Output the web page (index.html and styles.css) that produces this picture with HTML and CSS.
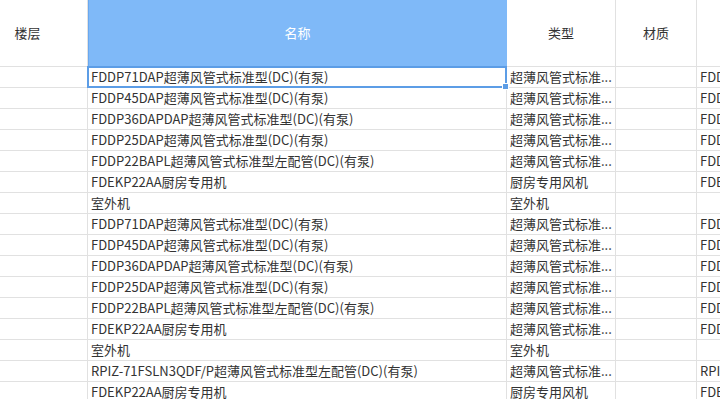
FILE: index.html
```html
<!DOCTYPE html>
<html lang="zh">
<head>
<meta charset="utf-8">
<link rel="stylesheet" href="styles.css">
</head>
<body>
<div class="sheet">
  <div class="row head">
    <div class="cell floor">楼层</div>
    <div class="cell hsel">名称</div>
    <div class="cell">类型</div>
    <div class="cell">材质</div>
    <div class="cell"></div>
  </div>
  <div class="row"><div class="cell"></div><div class="cell selected">FDDP71DAP超薄风管式标准型(DC)(有泵)</div><div class="cell">超薄风管式标准...</div><div class="cell"></div><div class="cell">FDDP71DAP</div></div>
  <div class="row"><div class="cell"></div><div class="cell">FDDP45DAP超薄风管式标准型(DC)(有泵)</div><div class="cell">超薄风管式标准...</div><div class="cell"></div><div class="cell">FDDP45DAP</div></div>
  <div class="row"><div class="cell"></div><div class="cell">FDDP36DAPDAP超薄风管式标准型(DC)(有泵)</div><div class="cell">超薄风管式标准...</div><div class="cell"></div><div class="cell">FDDP36DAP</div></div>
  <div class="row"><div class="cell"></div><div class="cell">FDDP25DAP超薄风管式标准型(DC)(有泵)</div><div class="cell">超薄风管式标准...</div><div class="cell"></div><div class="cell">FDDP25DAP</div></div>
  <div class="row"><div class="cell"></div><div class="cell">FDDP22BAPL超薄风管式标准型左配管(DC)(有泵)</div><div class="cell">超薄风管式标准...</div><div class="cell"></div><div class="cell">FDDP22BAPL</div></div>
  <div class="row"><div class="cell"></div><div class="cell">FDEKP22AA厨房专用机</div><div class="cell">厨房专用风机</div><div class="cell"></div><div class="cell">FDEKP22AA</div></div>
  <div class="row"><div class="cell"></div><div class="cell">室外机</div><div class="cell">室外机</div><div class="cell"></div><div class="cell"></div></div>
  <div class="row"><div class="cell"></div><div class="cell">FDDP71DAP超薄风管式标准型(DC)(有泵)</div><div class="cell">超薄风管式标准...</div><div class="cell"></div><div class="cell">FDDP71DAP</div></div>
  <div class="row"><div class="cell"></div><div class="cell">FDDP45DAP超薄风管式标准型(DC)(有泵)</div><div class="cell">超薄风管式标准...</div><div class="cell"></div><div class="cell">FDDP45DAP</div></div>
  <div class="row"><div class="cell"></div><div class="cell">FDDP36DAPDAP超薄风管式标准型(DC)(有泵)</div><div class="cell">超薄风管式标准...</div><div class="cell"></div><div class="cell">FDDP36DAP</div></div>
  <div class="row"><div class="cell"></div><div class="cell">FDDP25DAP超薄风管式标准型(DC)(有泵)</div><div class="cell">超薄风管式标准...</div><div class="cell"></div><div class="cell">FDDP25DAP</div></div>
  <div class="row"><div class="cell"></div><div class="cell">FDDP22BAPL超薄风管式标准型左配管(DC)(有泵)</div><div class="cell">超薄风管式标准...</div><div class="cell"></div><div class="cell">FDDP22BAPL</div></div>
  <div class="row"><div class="cell"></div><div class="cell">FDEKP22AA厨房专用机</div><div class="cell">超薄风管式标准...</div><div class="cell"></div><div class="cell">FDDP22BAPL</div></div>
  <div class="row"><div class="cell"></div><div class="cell">室外机</div><div class="cell">室外机</div><div class="cell"></div><div class="cell"></div></div>
  <div class="row"><div class="cell"></div><div class="cell">RPIZ-71FSLN3QDF/P超薄风管式标准型左配管(DC)(有泵)</div><div class="cell">超薄风管式标准...</div><div class="cell"></div><div class="cell">RPIZ-71FSLN3QDF/P</div></div>
  <div class="row"><div class="cell"></div><div class="cell">FDEKP22AA厨房专用机</div><div class="cell">厨房专用风机</div><div class="cell"></div><div class="cell">FDEKP22AA</div></div>
</div>
</body>
</html>
```

FILE: styles.css
```css
* { box-sizing: border-box; }
html, body {
  margin: 0;
  padding: 0;
  background: #ffffff;
  overflow: hidden;
}
.sheet {
  width: 720px;
  font-family: "Noto Sans CJK SC", "Noto Sans", sans-serif;
  font-size: 13px;
  color: #333333;
}
.row {
  display: grid;
  grid-template-columns: 88px 419px 109px 81px 120px;
  height: 21px;
}
.cell {
  border-right: 1px solid #e1e1e1;
  border-bottom: 1px solid #e1e1e1;
  padding: 0 4px 0 3px;
  white-space: nowrap;
  overflow: hidden;
  line-height: 20px;
  position: relative;
}
.head {
  height: 67px;
}
.head .cell {
  line-height: 66px;
  text-align: center;
  padding: 0;
}
.head .floor {
  padding-right: 32px;
}
.head .hsel {
  background: #7fb9f8;
  color: #ffffff;
  border-right-color: #7fb9f8;
  border-left: 1px solid #6aa8ef;
}
.selected::after {
  content: "";
  position: absolute;
  left: -1px;
  top: -1px;
  right: -1px;
  bottom: -1px;
  border: 2px solid #5c9de6;
  pointer-events: none;
}
.selected::before {
  content: "";
  position: absolute;
  right: -3px;
  bottom: -3px;
  width: 5px;
  height: 5px;
  background: #5c9de6;
  border: 1px solid #ffffff;
  z-index: 2;
}
.selected {
  overflow: visible;
}
```
